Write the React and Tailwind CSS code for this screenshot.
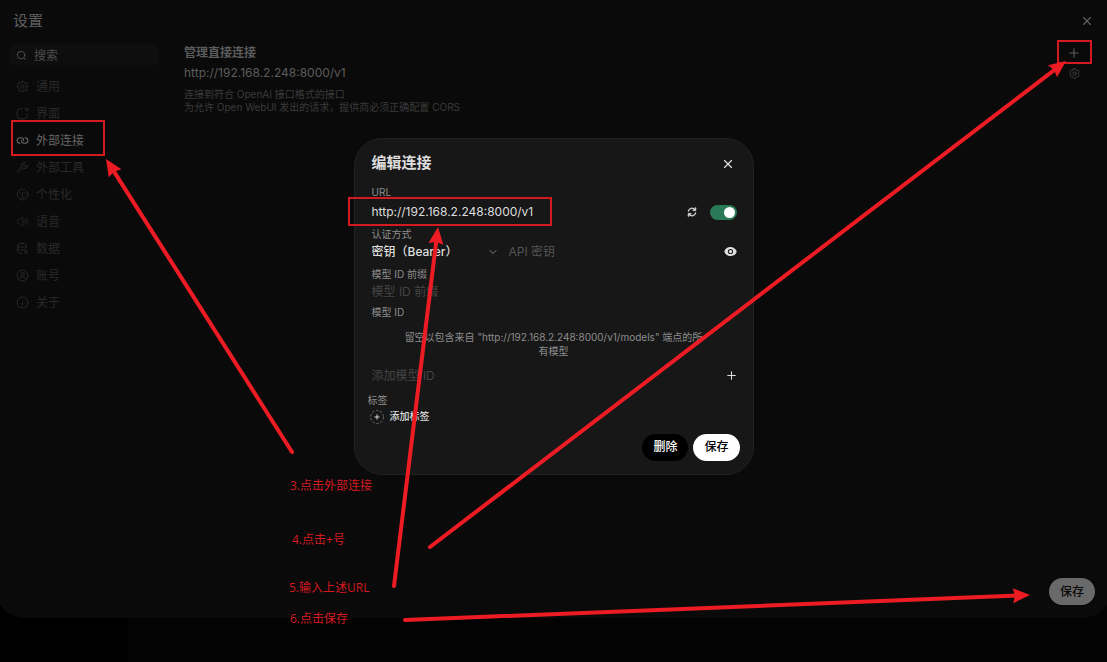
import { useState } from 'react';
import { Plus, X, Search, ChevronDown } from 'lucide-react';
import { HiOutlineCog6Tooth, HiOutlineSpeakerWave, HiMiniEye } from 'react-icons/hi2';

const strokeProps = {
  viewBox: '0 0 24 24',
  fill: 'none',
  stroke: 'currentColor',
  strokeWidth: 1.8,
  strokeLinecap: 'round',
  strokeLinejoin: 'round',
};

const GearIcon = ({ className }) => (
  <svg {...strokeProps} className={className}>
    <circle cx="12" cy="12" r="3" />
    <path d="M19.622 10.395l-1.097-2.650L20 6l-2-2-1.735 1.483-2.707-1.113L12.935 2h-1.954l-.632 2.401-2.645 1.115L6 4 4 6l1.453 1.789-1.080 2.657L2 11v2l2.401.656 1.113 2.643L4 18l2 2 1.791-1.460 2.606 1.072L11 22h2l.604-2.387 2.651-1.098C16.697 18.831 18 20 18 20l2-2-1.484-1.750 1.098-2.652L22 12.981V11l-2.378-.605Z" />
  </svg>
);

const AppIcon = ({ className }) => (
  <svg {...strokeProps} className={className}>
    <path d="M12 3H9a7 7 0 0 0-7 7v5a7 7 0 0 0 7 7h5a7 7 0 0 0 7-7v-3" />
    <circle cx="19.500" cy="4.500" r="2.600" />
  </svg>
);

const LinkIcon = ({ className }) => (
  <svg {...strokeProps} strokeWidth={2} className={className}>
    <path d="M14 11.998C14 9.506 11.683 7 8.857 7H7.143C4.303 7 2 9.238 2 11.998c0 2.378 1.71 4.368 4 4.873a5.3 5.3 0 0 0 1.143.124" />
    <path d="M10 11.998c0 2.491 2.317 4.997 5.143 4.997h1.714c2.84 0 5.143-2.237 5.143-4.997 0-2.379-1.71-4.37-4-4.874A5.3 5.3 0 0 0 16.857 7" />
  </svg>
);

const WrenchIcon = ({ className }) => (
  <svg {...strokeProps} className={className}>
    <path d="M10.050 10.607l-7.070 7.070a2 2 0 0 0 0 2.830 2 2 0 0 0 2.828 0l7.070-7.072" />
    <path d="M17.193 13.800a6 6 0 0 0 4.240-6.600L18.600 10l-3.500-1-1-3.500 2.800-2.830a6 6 0 0 0-6.600 7.900 6 6 0 0 0 6.893 3.230Z" />
  </svg>
);

const FaceIcon = ({ className }) => (
  <svg {...strokeProps} className={className}>
    <circle cx="12" cy="12" r="10" />
    <path d="M7 9.500V8M17 9.500V8M12 8v5.500h-1.500M9 17h6" />
  </svg>
);

const DatabaseIcon = ({ className }) => (
  <svg {...strokeProps} className={className}>
    <path d="M3 12v6s0 3 8 3M3 6v6s0 3 8 3c3 0 5-.4 6.200-1M19 6v5" />
    <path d="M11 2.500c8 0 8 3.500 8 3.500s0 3.500-8 3.500S3 6 3 6s0-3.500 8-3.500z" />
    <circle cx="18.500" cy="18.500" r="2.600" />
  </svg>
);

const AccountIcon = ({ className }) => (
  <svg {...strokeProps} className={className}>
    <circle cx="12" cy="12" r="10" />
    <circle cx="12" cy="9.500" r="3.200" />
    <path d="M5 18.500c1.500-2.600 4-3.500 7-3.500s5.500.9 7 3.500" />
  </svg>
);

const InfoIcon = ({ className }) => (
  <svg {...strokeProps} className={className}>
    <circle cx="12" cy="12" r="10" />
    <path d="M12 11.500v5M12 7.500h.01" />
  </svg>
);

const RefreshIcon = ({ className }) => (
  <svg viewBox="0 0 20 20" fill="currentColor" className={className}>
    <path
      fillRule="evenodd"
      clipRule="evenodd"
      d="M15.312 11.424a5.500 5.500 0 0 1-9.201 2.466l-.312-.311h2.433a.75.75 0 0 0 0-1.500H3.989a.75.75 0 0 0-.75.75v4.242a.75.75 0 0 0 1.500 0v-2.430l.310.310a7 7 0 0 0 11.712-3.138.75.75 0 0 0-1.449-.390Zm1.230-3.723a.75.75 0 0 0 .219-.530V2.929a.75.75 0 0 0-1.500 0V5.360l-.310-.310A7 7 0 0 0 3.239 8.188a.75.75 0 1 0 1.448.389A5.500 5.500 0 0 1 13.890 6.110l.311.310h-2.432a.75.75 0 0 0 0 1.500h4.243a.75.75 0 0 0 .530-.219Z"
      stroke="currentColor"
      strokeWidth="0.6"
    />
  </svg>
);

const menu = [
  { id: 'general', label: '通用', icon: GearIcon },
  { id: 'interface', label: '界面', icon: AppIcon },
  { id: 'connections', label: '外部连接', icon: LinkIcon },
  { id: 'tools', label: '外部工具', icon: WrenchIcon },
  { id: 'personalization', label: '个性化', icon: FaceIcon },
  { id: 'audio', label: '语音', icon: HiOutlineSpeakerWave },
  { id: 'data', label: '数据', icon: DatabaseIcon },
  { id: 'account', label: '账号', icon: AccountIcon },
  { id: 'about', label: '关于', icon: InfoIcon },
];

const arrows = [
  { from: [292, 452], to: [106, 159] },
  { from: [394, 586], to: [438, 227] },
  { from: [430, 547], to: [1066, 61] },
  { from: [405, 620], to: [1030, 595] },
];

function Arrow({ from, to }) {
  const length = Math.hypot(to[0] - from[0], to[1] - from[1]);
  const angle = (Math.atan2(to[1] - from[1], to[0] - from[0]) * 180) / Math.PI;

  return (
    <g transform={`translate(${from[0]} ${from[1]}) rotate(${angle})`}>
      <line x1="0" y1="0" x2={length - 12} y2="0" stroke="#ed1c24" strokeWidth="4" strokeLinecap="round" />
      <path d={`M${length} 0 l-17 7.500 l2 -7.500 l-2 -7.500 z`} fill="#ed1c24" />
    </g>
  );
}

function Annotations() {
  return (
    <div className="pointer-events-none absolute top-0 left-0 font-['Open_Sans','Noto_Sans_CJK_SC',sans-serif] text-[12px] leading-[18px] text-[#d31a21]">
      <svg width="1107" height="662" viewBox="0 0 1107 662" aria-hidden="true">
        <g fill="none" stroke="#d31a21" strokeWidth="2">
          <rect x="12" y="121" width="92" height="34" />
          <rect x="349" y="198" width="202" height="27" />
          <rect x="1058" y="41" width="33" height="22" />
        </g>
        {arrows.map((arrow) => (
          <Arrow key={arrow.to.join()} {...arrow} />
        ))}
      </svg>
      <p className="absolute top-[477px] left-[290px] whitespace-nowrap">3.点击外部连接</p>
      <p className="absolute top-[531px] left-[292px] whitespace-nowrap">4.点击+号</p>
      <p className="absolute top-[579px] left-[289px] whitespace-nowrap">5.输入上述URL</p>
      <p className="absolute top-[610px] left-[290px] whitespace-nowrap">6.点击保存</p>
    </div>
  );
}

function Sidebar({ active, onSelect }) {
  return (
    <nav className="w-[152px] shrink-0">
      <label className="flex h-[23px] items-center gap-[7px] rounded-full bg-[#0e0e0e] px-2 text-[#555]">
        <Search className="size-[11px] shrink-0" />
        <input
          type="text"
          placeholder="搜索"
          aria-label="搜索"
          className="w-full min-w-0 bg-transparent text-[12px] leading-5 outline-none placeholder:text-[#4c4c4c]"
        />
      </label>
      <ul className="mt-[6px]">
        {menu.map(({ id, label, icon: Icon }) => (
          <li key={id}>
            <button
              type="button"
              onClick={() => onSelect(id)}
              className={`flex h-[27px] w-full items-center gap-[7px] px-2 text-[12px] ${
                active === id ? 'text-[#676767]' : 'text-[#292929]'
              }`}
            >
              <Icon className="size-[13px]" />
              {label}
            </button>
          </li>
        ))}
      </ul>
    </nav>
  );
}

function EditConnectionDialog() {
  const [enabled, setEnabled] = useState(true);
  const [url, setUrl] = useState('http://192.168.2.248:8000/v1');

  return (
    <form
      role="dialog"
      aria-label="编辑连接"
      onSubmit={(e) => e.preventDefault()}
      className="w-[400px] rounded-[28px] border border-[#212121] bg-[#171717] pt-[14px] pr-[14px] pb-[13px] pl-[17px] text-[12px] text-[#dedede]"
    >
      <div className="flex h-[22px] items-center justify-between">
        <h2 className="text-[15px] font-semibold">编辑连接</h2>
        <button type="button" aria-label="关闭" className="mr-1">
          <X className="size-[14px]" />
        </button>
      </div>

      <label htmlFor="url" className="mt-[10px] block text-[10px] leading-[14px] text-[#8d8d8d]">URL</label>
      <div className="mt-[3px] flex h-5 items-center">
        <input
          id="url"
          type="text"
          value={url}
          onChange={(e) => setUrl(e.target.value)}
          className="h-5 min-w-0 flex-1 bg-transparent leading-5 outline-none"
        />
        <button type="button" aria-label="刷新" className="mr-3">
          <RefreshIcon className="size-3" />
        </button>
        <input
          type="checkbox"
          role="switch"
          aria-label="启用"
          checked={enabled}
          onChange={(e) => setEnabled(e.target.checked)}
          className="mt-[2px] mr-[2px] h-[15px] w-[27px] appearance-none rounded-full bg-[#333] p-[2px] before:block before:size-[11px] before:rounded-full before:bg-white checked:bg-[#2a7a57] checked:before:ml-3"
        />
      </div>

      <label htmlFor="auth" className="mt-[5px] block text-[10px] leading-[14px] text-[#8d8d8d]">认证方式</label>
      <div className="mt-px flex h-5 items-center">
        <div className="grid w-[129px] grid-cols-1 items-center">
          <select id="auth" className="col-start-1 row-start-1 h-5 appearance-none bg-transparent font-medium outline-none">
            <option>密钥（Bearer）</option>
          </select>
          <ChevronDown className="pointer-events-none col-start-1 row-start-1 mr-[2px] size-3 justify-self-end text-[#7c7f88]" />
        </div>
        <input
          type="password"
          placeholder="API 密钥"
          aria-label="API 密钥"
          className="ml-2 h-5 min-w-0 flex-1 bg-transparent leading-5 outline-none placeholder:text-[#555]"
        />
        <button type="button" aria-label="显示密钥" className="mr-[2px]">
          <HiMiniEye className="size-[13px]" />
        </button>
      </div>

      <label htmlFor="prefix" className="mt-[5px] block text-[10px] leading-[14px] text-[#8d8d8d]">模型 ID 前缀</label>
      <input
        id="prefix"
        type="text"
        placeholder="模型 ID 前缀"
        className="mt-px block h-5 w-full bg-transparent leading-5 outline-none placeholder:text-[#444]"
      />

      <h3 className="mt-[3px] text-[10px] leading-[14px] text-[#8d8d8d]">模型 ID</h3>
      <p className="mt-[11px] pr-[34px] pl-[31px] text-center text-[10px] leading-[14px] text-[#8d8d8d]">
        留空以包含来自 "http://192.168.2.248:8000/v1/models" 端点的所有模型
      </p>
      <div className="mt-2 flex h-5 items-center">
        <input
          type="text"
          placeholder="添加模型 ID"
          aria-label="添加模型 ID"
          className="h-5 min-w-0 flex-1 bg-transparent leading-5 outline-none placeholder:text-[#444]"
        />
        <button type="button" aria-label="添加" className="mr-px">
          <Plus className="size-[13px]" />
        </button>
      </div>

      <div className="-ml-1">
        <h3 className="mt-[7px] text-[10px] leading-[14px] text-[#8d8d8d]">标签</h3>
        <button type="button" className="flex h-5 items-center gap-[6px] text-[10px] font-medium">
          <svg viewBox="0 0 14 14" className="ml-[2px] size-[14px]" fill="none" stroke="currentColor">
            <circle cx="7" cy="7" r="6.500" stroke="#6b6b6b" strokeDasharray="2.500 1.600" />
            <path d="M7 4.500v5M4.500 7h5" />
          </svg>
          添加标签
        </button>
      </div>

      <div className="-mr-px mt-[7px] flex justify-end gap-[5px] font-medium">
        <button type="button" className="h-[27px] rounded-full bg-black px-[11px] text-white">删除</button>
        <button type="submit" className="h-[27px] rounded-full bg-white px-[11px] text-black">保存</button>
      </div>
    </form>
  );
}

export default function App() {
  const [active, setActive] = useState('connections');

  return (
    <div className="relative flex min-h-screen flex-col overflow-hidden bg-[linear-gradient(to_right,#000_128px,#030303_128px)] font-['Inter','Noto_Sans_CJK_SC',sans-serif]">
      <main className="relative -mx-1 flex flex-1 flex-col rounded-t-md rounded-b-[28px] bg-[#0a0a0a] px-3 pb-[13px]">
        <header className="flex h-11 items-center justify-between pr-[5px] pb-[2px] pl-[5px] text-[#5f5f5f]">
          <h1 className="text-[15px]">设置</h1>
          <button type="button" aria-label="关闭">
            <X className="size-[14px]" />
          </button>
        </header>

        <div className="flex flex-1 gap-6">
          <Sidebar active={active} onSelect={setActive} />
          <section className="flex min-w-0 flex-1 flex-col">
            <div className="flex justify-between text-[12px] text-[#5c5c5c]">
              <div>
                <h2 className="leading-[18px] font-semibold">管理直接连接</h2>
                <p className="mt-[2px] leading-[18px]">http://192.168.2.248:8000/v1</p>
                <p className="mt-[6px] text-[10px] leading-[13px] text-[#3b3b3b]">
                  连接到符合 OpenAI 接口格式的接口
                  <br />
                  为允许 Open WebUI 发出的请求，提供商必须正确配置 CORS
                </p>
              </div>
              <div className="mt-[2px] mr-[18px] flex flex-col items-center gap-[7px]">
                <button type="button" aria-label="添加连接">
                  <Plus className="size-[14px]" />
                </button>
                <button type="button" aria-label="配置">
                  <HiOutlineCog6Tooth className="size-[13px] text-[#4a4a4a]" />
                </button>
              </div>
            </div>
            <button type="button" className="mt-auto mr-1 h-[27px] self-end rounded-full bg-[#696969] px-[11px] text-[12px] font-medium text-[#0a0a0a]">
              保存
            </button>
          </section>
        </div>

        <div className="absolute inset-0 flex items-center justify-center pb-[6px]">
          <EditConnectionDialog />
        </div>
      </main>
      <div className="h-11 shrink-0" />
      <Annotations />
    </div>
  );
}
